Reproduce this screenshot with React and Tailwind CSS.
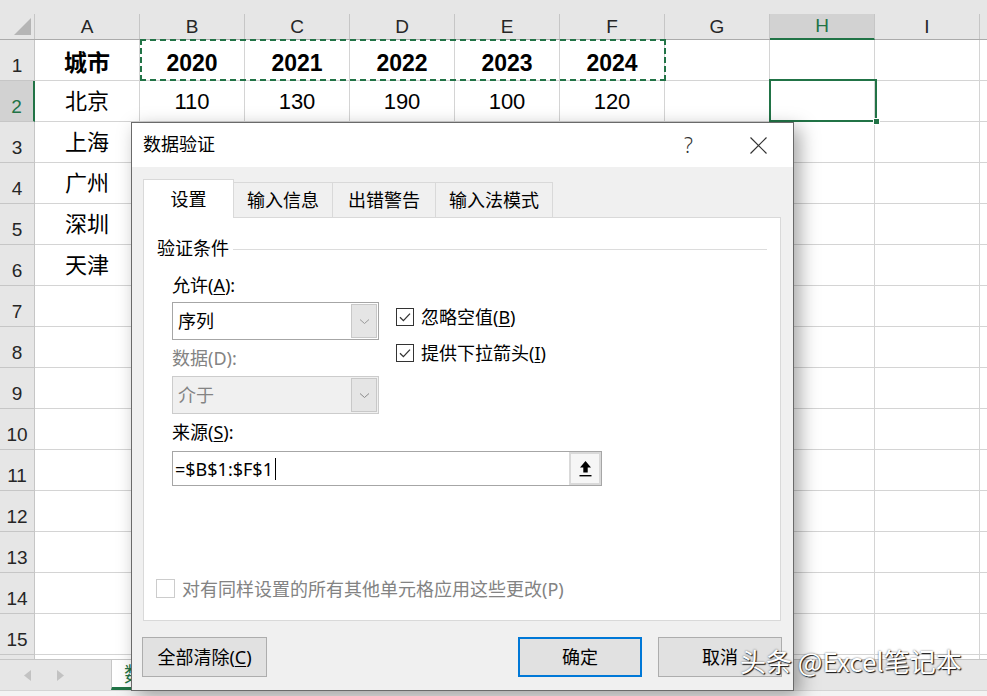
import React from 'react';

const COLS = ['A', 'B', 'C', 'D', 'E', 'F', 'G', 'H', 'I'];

const DATA = {
  1: ['城市', '2020', '2021', '2022', '2023', '2024'],
  2: ['北京', '110', '130', '190', '100', '120'],
  3: ['上海'],
  4: ['广州'],
  5: ['深圳'],
  6: ['天津'],
};

const ROWS = Array.from({ length: 16 }, (_, i) => i + 1);

const Check = ({ checked, disabled }) => (
  <div
    className={`w-[18px] h-[18px] shrink-0 border bg-white flex items-center justify-center ${
      disabled ? 'border-[#cccccc]' : 'border-[#333333]'
    }`}
  >
    {checked && (
      <svg width="14" height="12" viewBox="0 0 14 12">
        <path d="M2 6.2 L5.4 9.6 L12 2.6" fill="none" stroke="#333" strokeWidth="1.3" />
      </svg>
    )}
  </div>
);

const Chevron = ({ color }) => (
  <svg width="11" height="7" viewBox="0 0 11 7">
    <path d="M1 1.5 L5.5 5.5 L10 1.5" fill="none" stroke={color} strokeWidth="1" />
  </svg>
);

const Select = ({ value, disabled }) => (
  <div
    className={`h-[38px] flex p-px border ${
      disabled ? 'bg-[#f0f0f0] border-[#cccccc] text-[#838383]' : 'bg-white border-[#a6a6a6] text-black'
    }`}
  >
    <div className="flex-1 flex items-center pl-[4px]">{value}</div>
    <div className="w-[26px] border border-[#c8c8c8] bg-[#e5e5e5] flex items-center justify-center">
      <Chevron color={disabled ? '#8a8a8a' : '#9a9a9a'} />
    </div>
  </div>
);

const Btn = ({ children, primary, w }) => (
  <div
    className={`${w} h-[40px] bg-[#e1e1e1] flex items-center justify-center ${
      primary ? 'border-2 border-[#0078d7]' : 'border border-[#adadad]'
    }`}
  >
    {children}
  </div>
);

export default function App() {
  return (
    <div
      className="relative w-[987px] h-[696px] overflow-hidden bg-white flex flex-col text-black"
      style={{ fontFamily: '"Liberation Sans", "Noto Sans CJK SC", sans-serif' }}
    >
      {/* column headers */}
      <div className="h-[14px] shrink-0 bg-[#e6e6e6]" />
      <div className="h-[26px] shrink-0 flex bg-[#e6e6e6] border-b border-[#ababab]">
        <div className="w-[35px] shrink-0 border-r border-[#c6c6c6] relative">
          <svg className="absolute right-[3px] bottom-[4px]" width="17" height="17" viewBox="0 0 17 17">
            <polygon points="17,0 17,17 0,17" fill="#b5b5b5" />
          </svg>
        </div>
        {COLS.map((c) => (
          <div
            key={c}
            className={`w-[105px] shrink-0 border-r border-[#c6c6c6] flex items-center justify-center text-[19px] leading-[22px] ${
              c === 'H' ? 'bg-[#d2d2d2] text-[#217346] border-b-2 border-b-[#217346] -mb-px' : 'text-[#262626]'
            }`}
          >
            {c}
          </div>
        ))}
        <div className="flex-1" />
      </div>

      {/* grid */}
      <div className="flex-1 overflow-hidden">
        {ROWS.map((n) => {
          const cells = DATA[n] || [];
          return (
            <div key={n} className="h-[41px] shrink-0 flex">
              <div
                className={`w-[35px] shrink-0 border-b flex items-end justify-center pb-[3px] text-[19px] leading-[22px] ${
                  n === 2
                    ? 'bg-[#d2d2d2] text-[#217346] border-r-2 border-r-[#217346] border-b-[#c6c6c6]'
                    : 'bg-[#e6e6e6] text-[#262626] border-r border-[#c6c6c6]'
                }`}
              >
                {n}
              </div>
              {COLS.map((c, i) => (
                <div
                  key={c}
                  className={`w-[105px] shrink-0 border-r border-b border-[#d4d4d4] flex items-center justify-center text-[22px] ${
                    n === 1 ? 'font-bold pt-[7px] text-[23px]' : ''
                  }`}
                >
                  {cells[i] || ''}
                </div>
              ))}
              <div className="flex-1 border-b border-[#d4d4d4]" />
            </div>
          );
        })}
      </div>

      {/* sheet tab bar */}
      <div className="h-[37px] shrink-0 flex flex-col">
        <div className="h-[31px] bg-[#e6e6e6] border-t border-[#c6c6c6] flex">
          <div className="w-[111px] flex items-center pl-[24px] gap-[24px]">
            <svg width="8" height="11" viewBox="0 0 8 11">
              <polygon points="7,0 7,11 0,5.5" fill="#c2c2c2" />
            </svg>
            <svg width="8" height="11" viewBox="0 0 8 11">
              <polygon points="1,0 1,11 8,5.5" fill="#c2c2c2" />
            </svg>
          </div>
          <div
            className="w-[70px] bg-white border-l border-[#c6c6c6] border-b-[3px] border-b-[#217346] pl-[12px] flex items-center text-[20px] text-[#217346]"
            style={{ fontFamily: '"Noto Sans CJK SC", sans-serif' }}
          >
            数据
          </div>
        </div>
        <div className="flex-1 bg-[#f3f3f3] border-t border-[#d4d4d4]" />
      </div>

      {/* copy marquee B1:F1 */}
      <div className="absolute left-[140px] top-[39px] w-[526px] h-[42px] border-2 border-dashed border-[#217346]" />

      {/* selected H2 */}
      <div className="absolute left-[769px] top-[79px] w-[108px] h-[43px] border-2 border-[#217346]">
        <div className="absolute -right-[5px] -bottom-[5px] w-[7px] h-[7px] bg-[#217346] border border-white" />
      </div>

      {/* dialog */}
      <div
        className="absolute left-[131px] top-[122px] w-[663px] h-[569px] border border-[#6a6a6a] bg-[#f0f0f0] flex flex-col shadow-[6px_6px_18px_rgba(0,0,0,0.35)] text-[18px] leading-[20px]"
        style={{ fontFamily: '"Noto Sans", "Noto Sans CJK SC", sans-serif' }}
      >
        <div className="h-[44px] shrink-0 bg-white flex items-center pl-[11px]">
          <span className="flex-1 -mt-[2px]">数据验证</span>
          <span className="text-[21px] text-[#333] font-light mr-[57px]">?</span>
          <svg className="mr-[26px]" width="17" height="17" viewBox="0 0 17 17">
            <path d="M0.5 0.5 L16.5 16.5 M16.5 0.5 L0.5 16.5" stroke="#333" strokeWidth="1.2" />
          </svg>
        </div>

        <div className="flex-1 px-[11px] pt-[12px] flex flex-col">
          {/* tabs */}
          <div className="h-[38px] flex items-end relative z-10">
            <div className="w-[91px] h-[39px] -mb-px bg-white border border-b-0 border-[#d9d9d9] flex items-center justify-center">
              设置
            </div>
            <div className="w-[99px] h-[35px] border-t border-r border-[#d9d9d9] flex items-center justify-center">
              输入信息
            </div>
            <div className="w-[103px] h-[35px] border-t border-r border-[#d9d9d9] flex items-center justify-center">
              出错警告
            </div>
            <div className="w-[117px] h-[35px] border-t border-r border-[#d9d9d9] flex items-center justify-center">
              输入法模式
            </div>
          </div>

          {/* panel */}
          <div className="w-[638px] h-[404px] bg-white border border-[#d9d9d9] pt-[20px] px-[13px] flex flex-col">
            <div className="h-[20px] flex items-center gap-[4px]">
              <span>验证条件</span>
              <div className="flex-1 h-px bg-[#dcdcdc] mt-[2px]" />
            </div>

            <div className="flex pl-[15px] mt-[17px]">
              <div className="w-[207px] flex flex-col">
                <div className="h-[20px]">
                  允许(<span className="underline underline-offset-2">A</span>):
                </div>
                <div className="mt-[7px]">
                  <Select value="序列" />
                </div>
                <div className="h-[20px] mt-[8px] text-[#838383]">数据(D):</div>
                <div className="mt-[8px]">
                  <Select value="介于" disabled />
                </div>
              </div>
              <div className="ml-[17px] pt-[33px] flex flex-col gap-[18px]">
                <div className="h-[18px] flex items-center gap-[7px]">
                  <Check checked />
                  <span>
                    忽略空值(<span className="underline underline-offset-2">B</span>)
                  </span>
                </div>
                <div className="h-[18px] flex items-center gap-[7px]">
                  <Check checked />
                  <span>
                    提供下拉箭头(<span className="underline underline-offset-2">I</span>)
                  </span>
                </div>
              </div>
            </div>

            <div className="pl-[15px] mt-[8px]">
              <div className="h-[20px]">
                来源(<span className="underline underline-offset-2">S</span>):
              </div>
              <div className="mt-[9px] w-[430px] h-[35px] border border-[#a6a6a6] bg-white flex">
                <div className="flex-1 flex items-center pl-[2px]">
                  <span>=$B$1:$F$1</span>
                  <span className="w-px h-[22px] bg-black ml-[2px]" />
                </div>
                <div className="w-[32px] border-2 border-[#d9d9d9] bg-[#f6f6f6] flex items-center justify-center">
                  <svg width="13" height="18" viewBox="0 0 13 18">
                    <polygon points="6.5,1 1,7.5 4.3,7.5 4.3,12.5 8.7,12.5 8.7,7.5 12,7.5" fill="#000" />
                    <rect x="0.5" y="15" width="12" height="1.4" fill="#000" />
                  </svg>
                </div>
              </div>
            </div>

            <div className="mt-auto mb-[22px] h-[19px] flex items-center gap-[7px] -ml-px text-[#838383]">
              <div className="w-[19px] h-[19px] border border-[#cccccc] bg-white" />
              <span>对有同样设置的所有其他单元格应用这些更改(P)</span>
            </div>
          </div>

          {/* buttons */}
          <div className="mt-[16px] flex -ml-px">
            <Btn w="w-[125px]">
              全部清除(<span className="underline underline-offset-2">C</span>)
            </Btn>
            <div className="flex-1" />
            <Btn w="w-[124px]" primary>
              确定
            </Btn>
            <div className="w-[16px]" />
            <Btn w="w-[124px]">取消</Btn>
          </div>
        </div>
      </div>

      {/* watermark */}
      <div
        className="absolute left-[740px] top-[646px] text-white text-[26px] leading-[30px] [text-shadow:1px_1px_1px_rgba(0,0,0,0.9),0_0_2px_rgba(0,0,0,0.6)]"
        style={{ fontFamily: '"Noto Sans CJK SC", sans-serif' }}
      >
        头条 @Excel笔记本
      </div>
    </div>
  );
}
